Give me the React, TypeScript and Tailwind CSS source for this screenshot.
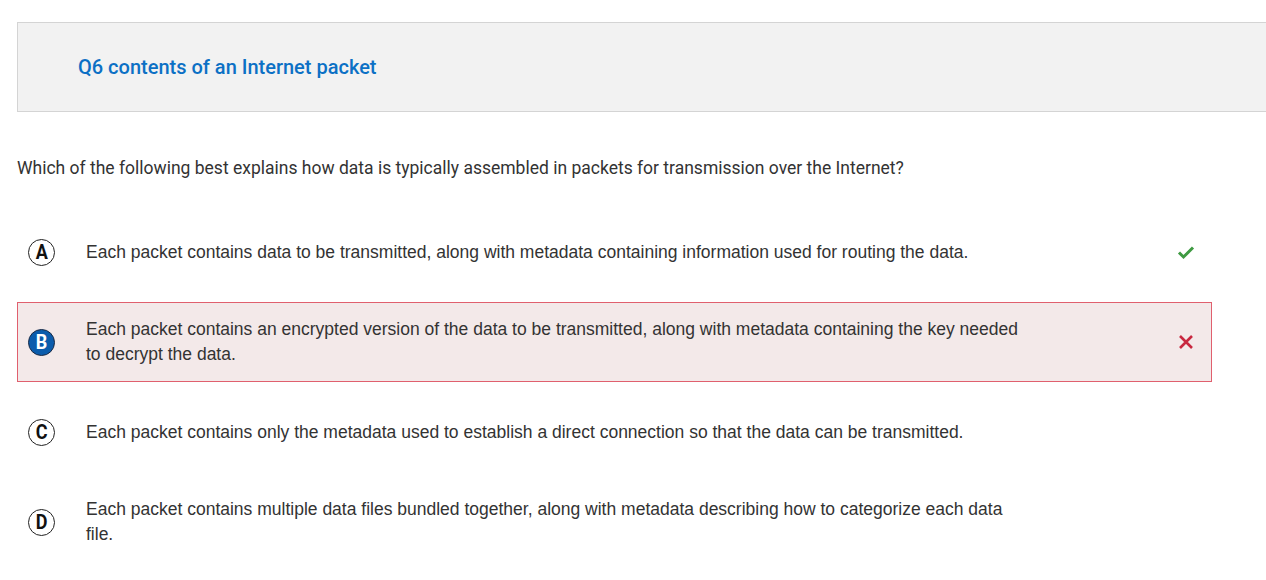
import React from "react";

const options = [
  { letter: "A", text: "Each packet contains data to be transmitted, along with metadata containing information used for routing the data.", state: "correct" },
  { letter: "B", text: "Each packet contains an encrypted version of the data to be transmitted, along with metadata containing the key needed to decrypt the data.", state: "wrong" },
  { letter: "C", text: "Each packet contains only the metadata used to establish a direct connection so that the data can be transmitted.", state: "none" },
  { letter: "D", text: "Each packet contains multiple data files bundled together, along with metadata describing how to categorize each data file.", state: "none" },
];

function Check() {
  return (
    <svg width="18" height="16" viewBox="0 0 18 16">
      <path d="M2 8.5 L6.5 13 L16 3.5" fill="none" stroke="#3f9a42" strokeWidth="3" />
    </svg>
  );
}

function Cross() {
  return (
    <svg width="16" height="16" viewBox="0 0 16 16">
      <path d="M2 2 L14 14 M14 2 L2 14" fill="none" stroke="#c8283f" strokeWidth="2.6" />
    </svg>
  );
}

export default function App() {
  return (
    <div className="w-[1266px] h-[580px] overflow-hidden bg-white pl-[17px] pt-[22px]">
      <div className="w-[1270px] h-[90px] bg-[#f2f2f2] border border-[#d4d4d4] flex items-center pl-[60px]">
        <span className="text-[20px] font-medium text-[#0c70c5]" style={{ fontFamily: "Roboto, sans-serif" }}>
          Q6 contents of an Internet packet
        </span>
      </div>
      <div
        className="mt-[44px] text-[17.5px] leading-[24px] text-[#333333]"
        style={{ fontFamily: "Roboto, sans-serif" }}
      >
        Which of the following best explains how data is typically assembled in packets for transmission over the Internet?
      </div>
      <div className="mt-[32px] flex flex-col gap-[10px] w-[1195px]">
        {options.map((o) => (
          <div
            key={o.letter}
            className={
              o.state === "wrong"
                ? "h-[80px] flex items-center border border-[#e0606e] bg-[#f3e9e9] pl-[10px] pr-[16px]"
                : "h-[80px] flex items-center border border-transparent pl-[10px] pr-[16px]"
            }
          >
            <div
              className={
                o.state === "wrong"
                  ? "w-[27px] h-[27px] rounded-full bg-[#0b5cac] border-[1.5px] border-[#1b2b45] flex items-center justify-center text-white text-[20px] font-bold shrink-0"
                  : "w-[27px] h-[27px] rounded-full border-[1.5px] border-[#222222] bg-white flex items-center justify-center text-[#111111] text-[20px] font-bold shrink-0"
              }
              style={{ fontFamily: "Roboto, 'Liberation Sans', Arial, sans-serif" }}
            >
              <span className="inline-block scale-x-90 leading-none">{o.letter}</span>
            </div>
            <div
              className="ml-[31px] w-[940px] text-[17.5px] leading-[25px] text-[#333333]"
              style={{ fontFamily: "'Liberation Sans', Arial, sans-serif" }}
            >
              {o.text}
            </div>
            <div className="ml-auto w-[18px] flex justify-center">
              {o.state === "correct" && <Check />}
              {o.state === "wrong" && <Cross />}
            </div>
          </div>
        ))}
      </div>
    </div>
  );
}
